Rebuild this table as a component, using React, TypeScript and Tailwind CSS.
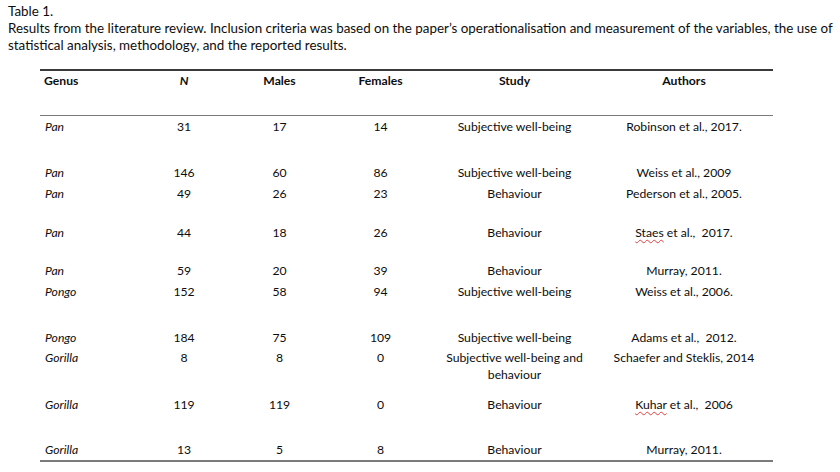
import React from "react";

type Row = {
  h: string;
  genus: string;
  n: string;
  m: string;
  f: string;
  study: React.ReactNode;
  authors: React.ReactNode;
};

const Sp = ({ children }: { children: React.ReactNode }) => (
  <span className="underline decoration-wavy decoration-[#e04040] decoration-[1px] underline-offset-[2px]">{children}</span>
);

const rows: Row[] = [
  { h: "h-[46px]", genus: "Pan", n: "31", m: "17", f: "14", study: "Subjective well-being", authors: "Robinson et al., 2017." },
  { h: "h-[21px]", genus: "Pan", n: "146", m: "60", f: "86", study: "Subjective well-being", authors: "Weiss et al., 2009" },
  { h: "h-[39px]", genus: "Pan", n: "49", m: "26", f: "23", study: "Behaviour", authors: "Pederson et al., 2005." },
  { h: "h-[38px]", genus: "Pan", n: "44", m: "18", f: "26", study: "Behaviour", authors: (<><Sp>Staes</Sp>{" et al.,  2017."}</>) },
  { h: "h-[21px]", genus: "Pan", n: "59", m: "20", f: "39", study: "Behaviour", authors: "Murray, 2011." },
  { h: "h-[46px]", genus: "Pongo", n: "152", m: "58", f: "94", study: "Subjective well-being", authors: "Weiss et al., 2006." },
  { h: "h-[20px]", genus: "Pongo", n: "184", m: "75", f: "109", study: "Subjective well-being", authors: "Adams et al.,  2012." },
  { h: "h-[47px]", genus: "Gorilla", n: "8", m: "8", f: "0", study: (<>Subjective well-being and<br />behaviour</>), authors: "Schaefer and Steklis, 2014" },
  { h: "h-[45px]", genus: "Gorilla", n: "119", m: "119", f: "0", study: "Behaviour", authors: (<><Sp>Kuhar</Sp>{" et al.,  2006"}</>) },
  { h: "h-[17px]", genus: "Gorilla", n: "13", m: "5", f: "8", study: "Behaviour", authors: "Murray, 2011." },
];

const grid = "grid grid-cols-[96px_96px_95px_107px_161px_178px]";

export default function App() {
  return (
    <div className="w-[840px] h-[472px] bg-white text-[#0d0d0d] font-['Lato',sans-serif] leading-[17px] overflow-hidden">
      <div className="pl-[8px] pt-[3px] text-[13.4px]">
        <p>Table 1.</p>
        <p>
          Results from the literature review. Inclusion criteria was based on the paper’s operationalisation and measurement of the variables, the use of
          <br />
          statistical analysis, methodology, and the reported results.
        </p>
      </div>
      <div className="ml-[40px] w-[733px] mt-[15px] text-[12.2px]">
        <div className="h-[1.5px] bg-[#3a3a3a]" />
        <div className={`${grid} h-[44px] pt-[1px] font-bold`}>
          <div className="pl-[4px]">Genus</div>
          <div className="text-center italic">N</div>
          <div className="text-center">Males</div>
          <div className="text-center">Females</div>
          <div className="text-center">Study</div>
          <div className="text-center">Authors</div>
        </div>
        <div className="h-[1.5px] bg-[#7a7a7a]" />
        <div className="mt-[2px]">
          {rows.map((r, i) => (
            <div key={i} className={`${grid} ${r.h}`}>
              <div className="pl-[5px] italic">{r.genus}</div>
              <div className="text-center">{r.n}</div>
              <div className="text-center">{r.m}</div>
              <div className="text-center">{r.f}</div>
              <div className="text-center">{r.study}</div>
              <div className="text-center whitespace-pre">{r.authors}</div>
            </div>
          ))}
        </div>
        <div className="mt-[2px] h-[2px] bg-[#7a7a7a]" />
      </div>
    </div>
  );
}
